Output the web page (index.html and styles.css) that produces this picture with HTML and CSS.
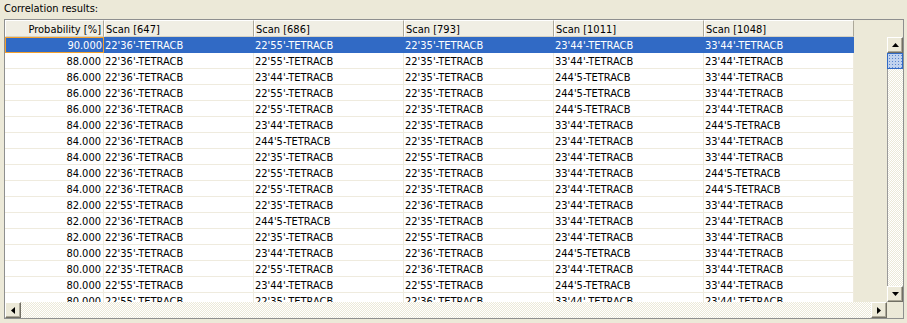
FILE: index.html
```html
<!DOCTYPE html>
<html>
<head>
<meta charset="utf-8">
<link rel="stylesheet" href="styles.css">
</head>
<body>
<div class="label">Correlation results:</div>
<div class="grid">
  <div class="upper">
    <div class="table">
      <div class="row head">
        <div class="c c0">Probability [%]</div>
        <div class="c">Scan [647]</div>
        <div class="c">Scan [686]</div>
        <div class="c">Scan [793]</div>
        <div class="c">Scan [1011]</div>
        <div class="c">Scan [1048]</div>
      </div>
      <div class="row sel"><div class="c c0 focus">90.000</div><div class="c">22'36'-TETRACB</div><div class="c">22'55'-TETRACB</div><div class="c">22'35'-TETRACB</div><div class="c">23'44'-TETRACB</div><div class="c">33'44'-TETRACB</div></div>
      <div class="row"><div class="c c0">88.000</div><div class="c">22'36'-TETRACB</div><div class="c">22'55'-TETRACB</div><div class="c">22'35'-TETRACB</div><div class="c">33'44'-TETRACB</div><div class="c">23'44'-TETRACB</div></div>
      <div class="row"><div class="c c0">86.000</div><div class="c">22'36'-TETRACB</div><div class="c">23'44'-TETRACB</div><div class="c">22'35'-TETRACB</div><div class="c">244'5-TETRACB</div><div class="c">33'44'-TETRACB</div></div>
      <div class="row"><div class="c c0">86.000</div><div class="c">22'36'-TETRACB</div><div class="c">22'55'-TETRACB</div><div class="c">22'35'-TETRACB</div><div class="c">244'5-TETRACB</div><div class="c">33'44'-TETRACB</div></div>
      <div class="row"><div class="c c0">86.000</div><div class="c">22'36'-TETRACB</div><div class="c">22'55'-TETRACB</div><div class="c">22'35'-TETRACB</div><div class="c">244'5-TETRACB</div><div class="c">23'44'-TETRACB</div></div>
      <div class="row"><div class="c c0">84.000</div><div class="c">22'36'-TETRACB</div><div class="c">23'44'-TETRACB</div><div class="c">22'35'-TETRACB</div><div class="c">33'44'-TETRACB</div><div class="c">244'5-TETRACB</div></div>
      <div class="row"><div class="c c0">84.000</div><div class="c">22'36'-TETRACB</div><div class="c">244'5-TETRACB</div><div class="c">22'35'-TETRACB</div><div class="c">23'44'-TETRACB</div><div class="c">33'44'-TETRACB</div></div>
      <div class="row"><div class="c c0">84.000</div><div class="c">22'36'-TETRACB</div><div class="c">22'35'-TETRACB</div><div class="c">22'55'-TETRACB</div><div class="c">23'44'-TETRACB</div><div class="c">33'44'-TETRACB</div></div>
      <div class="row"><div class="c c0">84.000</div><div class="c">22'36'-TETRACB</div><div class="c">22'55'-TETRACB</div><div class="c">22'35'-TETRACB</div><div class="c">33'44'-TETRACB</div><div class="c">244'5-TETRACB</div></div>
      <div class="row"><div class="c c0">84.000</div><div class="c">22'36'-TETRACB</div><div class="c">22'55'-TETRACB</div><div class="c">22'35'-TETRACB</div><div class="c">23'44'-TETRACB</div><div class="c">244'5-TETRACB</div></div>
      <div class="row"><div class="c c0">82.000</div><div class="c">22'55'-TETRACB</div><div class="c">22'35'-TETRACB</div><div class="c">22'36'-TETRACB</div><div class="c">23'44'-TETRACB</div><div class="c">33'44'-TETRACB</div></div>
      <div class="row"><div class="c c0">82.000</div><div class="c">22'36'-TETRACB</div><div class="c">244'5-TETRACB</div><div class="c">22'35'-TETRACB</div><div class="c">33'44'-TETRACB</div><div class="c">23'44'-TETRACB</div></div>
      <div class="row"><div class="c c0">82.000</div><div class="c">22'36'-TETRACB</div><div class="c">22'35'-TETRACB</div><div class="c">22'55'-TETRACB</div><div class="c">23'44'-TETRACB</div><div class="c">33'44'-TETRACB</div></div>
      <div class="row"><div class="c c0">80.000</div><div class="c">22'35'-TETRACB</div><div class="c">23'44'-TETRACB</div><div class="c">22'36'-TETRACB</div><div class="c">244'5-TETRACB</div><div class="c">33'44'-TETRACB</div></div>
      <div class="row"><div class="c c0">80.000</div><div class="c">22'35'-TETRACB</div><div class="c">22'55'-TETRACB</div><div class="c">22'36'-TETRACB</div><div class="c">23'44'-TETRACB</div><div class="c">33'44'-TETRACB</div></div>
      <div class="row"><div class="c c0">80.000</div><div class="c">22'55'-TETRACB</div><div class="c">23'44'-TETRACB</div><div class="c">22'55'-TETRACB</div><div class="c">244'5-TETRACB</div><div class="c">33'44'-TETRACB</div></div>
      <div class="row"><div class="c c0">80.000</div><div class="c">22'55'-TETRACB</div><div class="c">22'35'-TETRACB</div><div class="c">22'36'-TETRACB</div><div class="c">33'44'-TETRACB</div><div class="c">23'44'-TETRACB</div></div>
    </div>
    <div class="vcol">
      <div class="vscroll">
        <div class="btn"><svg width="7" height="4" viewBox="0 0 7 4"><path d="M3.5 0 L7 4 L0 4 Z" fill="#000"/></svg></div>
        <div class="thumb"></div>
        <div class="track"></div>
        <div class="btn"><svg width="7" height="4" viewBox="0 0 7 4"><path d="M0 0 L7 0 L3.5 4 Z" fill="#000"/></svg></div>
      </div>
    </div>
  </div>
  <div class="lower">
    <div class="hscroll">
      <div class="btn"><svg width="4" height="7" viewBox="0 0 4 7"><path d="M4 0 L4 7 L0 3.5 Z" fill="#000"/></svg></div>
      <div class="htrack"></div>
      <div class="btn"><svg width="4" height="7" viewBox="0 0 4 7"><path d="M0 0 L4 3.5 L0 7 Z" fill="#000"/></svg></div>
    </div>
    <div class="corner"></div>
  </div>
</div>
</body>
</html>
```
FILE: styles.css
```css
html, body {
  margin: 0;
  padding: 0;
  background: #ECE9D8;
  width: 907px;
  height: 323px;
  overflow: hidden;
  font-family: "DejaVu Sans Condensed", "DejaVu Sans", sans-serif;
  font-stretch: condensed;
  font-size: 11px;
  color: #000;
}
.label {
  height: 19px;
  line-height: 16px;
  padding-top: 1px;
  padding-left: 4px;
  box-sizing: border-box;
}
.grid {
  margin-left: 4px;
  width: 900px;
  height: 300px;
  box-sizing: border-box;
  border: 1px solid #8E8F8F;
  display: flex;
  flex-direction: column;
}
.upper {
  display: flex;
  height: 282px;
  overflow: hidden;
}
.table {
  width: 882px;
  height: 282px;
  overflow: hidden;
}
.row {
  display: flex;
  height: 16px;
}
.c {
  width: 150px;
  flex: none;
  box-sizing: border-box;
  height: 16px;
  line-height: 15px;
  padding-top: 1px;
  padding-left: 1px;
  background: #fff;
  border-right: 1px solid #EFEBDE;
  border-bottom: 1px solid #EFEBDE;
  white-space: nowrap;
  overflow: hidden;
}
.c0 {
  width: 99px;
  text-align: right;
  padding-right: 2px;
  padding-left: 0;
}
.head {
  height: 17px;
}
.head .c {
  height: 17px;
  line-height: 15px;
  padding-top: 1px;
  background: #F0EEE4;
  border-top: 1px solid #fff;
  border-left: 1px solid #fff;
  border-right: 1px solid #ACA899;
  border-bottom: 1px solid #D6D2C2;
  padding-left: 1px;
}
.head .c0 {
  padding-right: 2px;
}
.sel .c {
  background: #316AC5;
  color: #fff;
  border-color: #316AC5;
}
.sel .c.focus {
  border: 1px solid #F4A12C;
  line-height: 14px;
  padding-top: 1px;
  padding-right: 1px;
}
.vcol {
  width: 16px;
  padding-top: 17px;
}
.vscroll {
  display: flex;
  flex-direction: column;
  height: 265px;
}
.btn {
  width: 16px;
  height: 16px;
  flex: none;
  box-sizing: border-box;
  background: #ECE9D8;
  border-top: 1px solid #fff;
  border-left: 1px solid #fff;
  border-right: 1px solid #716F64;
  border-bottom: 1px solid #716F64;
  box-shadow: inset -1px -1px 0 #ACA899;
  display: flex;
  align-items: center;
  justify-content: center;
}
.thumb {
  height: 16px;
  flex: none;
  box-sizing: border-box;
  border: 1px solid #316AC5;
  background: radial-gradient(circle, #5A86D0 0.6px, transparent 0.8px) 0 0/3px 3px, #C1D3EE;
}
.track {
  flex: 1;
  border-left: 1px solid #9A9A9A;
  background: repeating-conic-gradient(#fff 0 25%, #ECE9D8 0 50%) 0 0/2px 2px;
}
.lower {
  display: flex;
  height: 16px;
}
.hscroll {
  width: 882px;
  display: flex;
}
.htrack {
  flex: 1;
  background: repeating-conic-gradient(#fff 0 25%, #ECE9D8 0 50%) 0 0/2px 2px;
}
.corner {
  width: 16px;
  background: #ECE9D8;
}
```
